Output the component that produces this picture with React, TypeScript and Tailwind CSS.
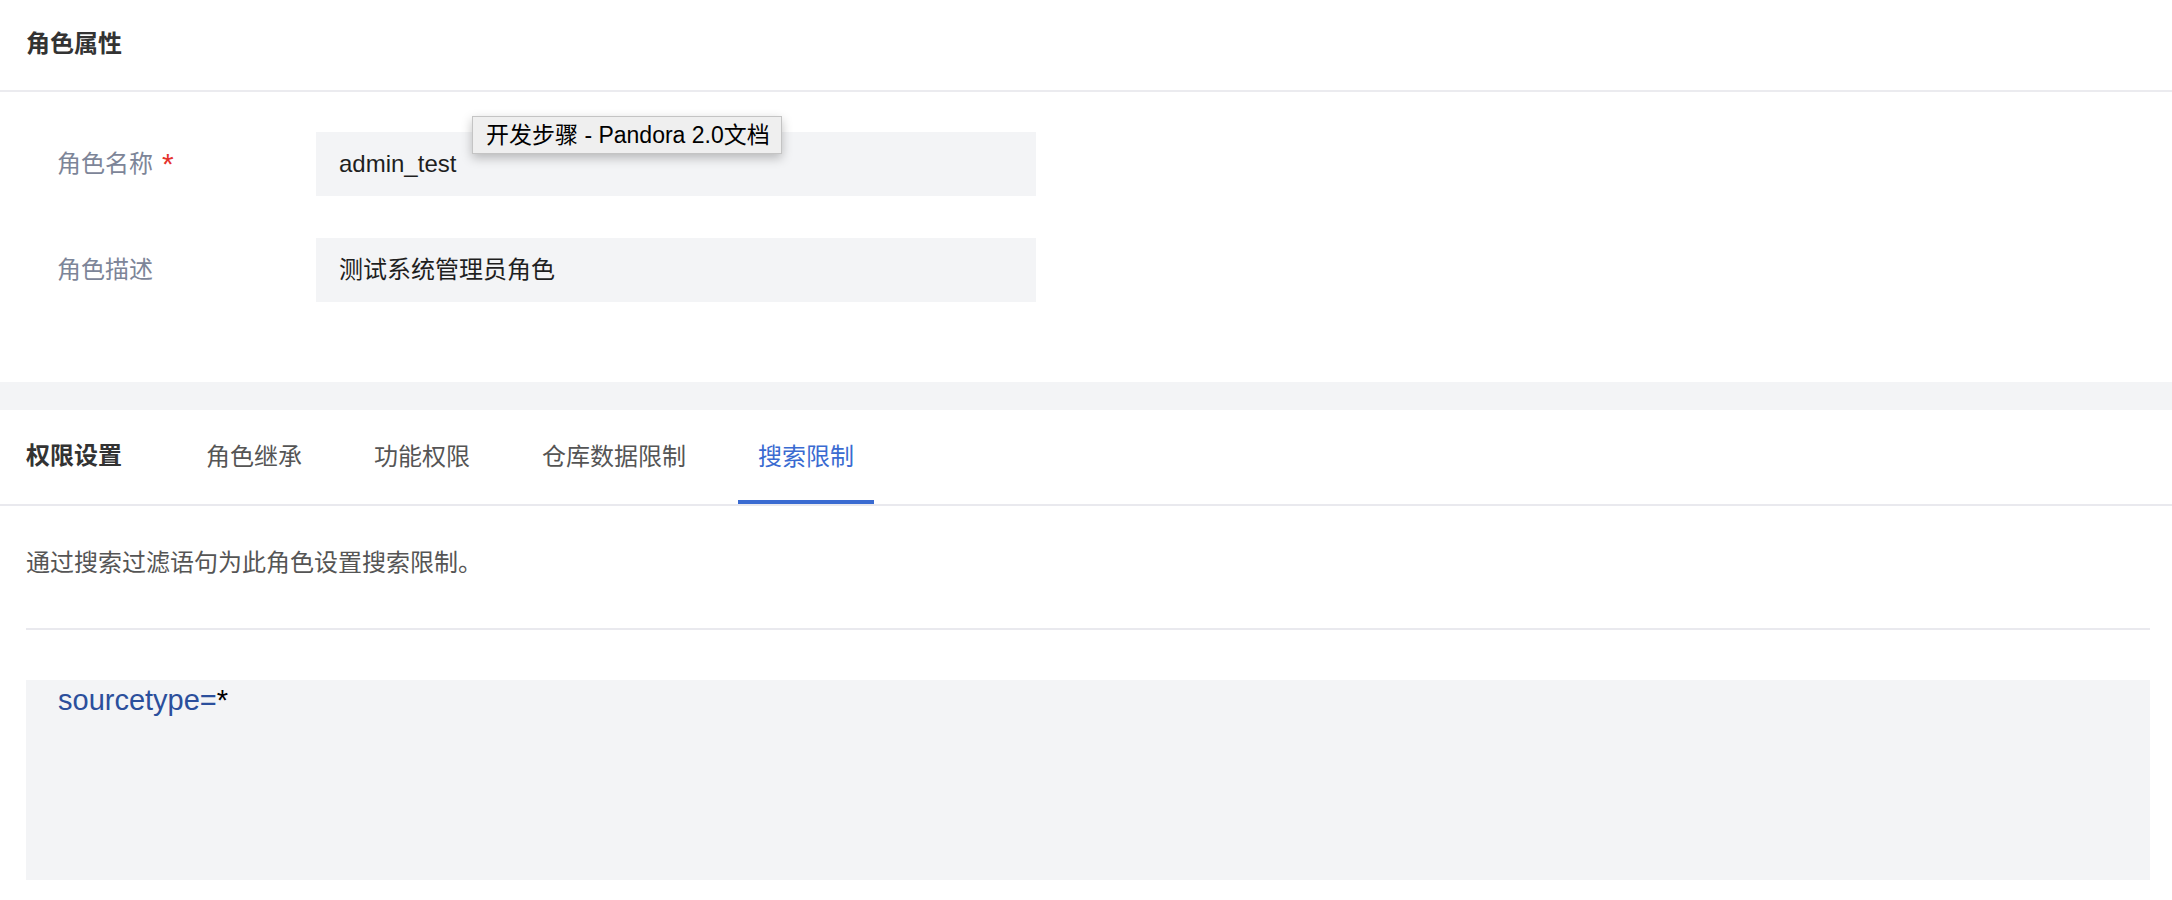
import React from 'react'

// ======= 数据 =======
const TABS = ['角色继承', '功能权限', '仓库数据限制', '搜索限制']
const ACTIVE_TAB = '搜索限制'

const FONT = "font-['Helvetica_Neue','Liberation_Sans','Noto_Sans_CJK_SC',sans-serif]"

// ======= 表单行 =======
function FieldRow({ label, value, required }: { label: string; value: string; required?: boolean }) {
  return (
    <div className="flex items-center">
      <div className="flex w-[316px] items-center pl-[57px] text-[24px] leading-[32px] text-[#7d8598]">
        {label}
        {required && <span className="ml-[9px] text-[30px] leading-[32px] text-[#e5322d]">*</span>}
      </div>
      <div className="flex h-[64px] w-[720px] items-center bg-[#f3f4f6] px-[23px] text-[24px] text-[#1f1f1f]">
        {value}
      </div>
    </div>
  )
}

export default function App() {
  return (
    <div className={`relative min-h-[900px] w-full bg-white ${FONT}`}>
      {/* 角色属性 */}
      <div className="flex h-[92px] items-center border-b-2 border-[#ebebef] pb-[2px] pl-[26px]">
        <h1 className="text-[24px] font-bold text-[#333]">角色属性</h1>
      </div>
      <div className="flex flex-col gap-[42px] pb-[80px] pt-[40px]">
        <FieldRow label="角色名称" value="admin_test" required />
        <FieldRow label="角色描述" value="测试系统管理员角色" />
      </div>

      {/* 分隔带 */}
      <div className="h-[28px] bg-[#f3f4f6]" />

      {/* 权限设置 Tabs */}
      <div className="flex h-[96px] items-stretch border-b-2 border-[#e9e9ee] pl-[26px]">
        <div className="flex items-center pb-[2px] text-[24px] font-bold text-[#333]">权限设置</div>
        <div className="ml-[64px] flex gap-[32px]">
          {TABS.map((t) => (
            <div
              key={t}
              className={
                'flex items-center border-b-4 px-[20px] pt-[4px] text-[24px] ' +
                (t === ACTIVE_TAB
                  ? 'border-[#3a6bd1] text-[#3a6bd1]'
                  : 'border-transparent text-[#555]')
              }
            >
              {t}
            </div>
          ))}
        </div>
      </div>

      {/* 内容 */}
      <div className="pl-[26px] pr-[22px]">
        <p className="pt-[39px] text-[24px] leading-[36px] text-[#555]">
          通过搜索过滤语句为此角色设置搜索限制。
        </p>
        <div className="mt-[47px] h-[2px] bg-[#e9e9ee]" />
        <div className="mt-[50px] h-[200px] bg-[#f3f4f6] pl-[32px] pt-[2px] text-[29px] leading-[36px]">
          <span className="text-[#2b4f9c]">sourcetype=</span>
          <span className="text-black">*</span>
        </div>
      </div>

      {/* 浏览器 tooltip */}
      <div className="absolute left-[472px] top-[116px] flex h-[38px] w-[310px] items-center border border-[#c4c4c4] bg-[#efefef] pl-[13px] text-[23px] text-black shadow-[0_4px_10px_rgba(0,0,0,0.25)]">
        开发步骤 - Pandora 2.0文档
      </div>
    </div>
  )
}
